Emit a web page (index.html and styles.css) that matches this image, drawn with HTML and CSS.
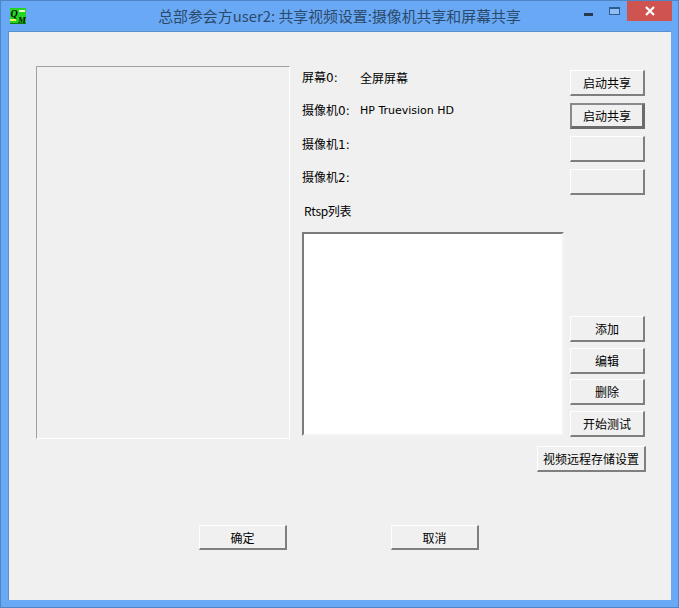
FILE: index.html
```html
<!DOCTYPE html>
<html lang="zh-CN">
<head>
    <meta charset="UTF-8">
    <meta name="viewport" content="width=device-width, initial-scale=1.0">
    <title>共享视频设置</title>
    <link rel="stylesheet" href="styles.css">
</head>
<body>
    <div class="window">
        <div class="titlebar">
            <div class="title-left">
                <svg class="app-icon" width="16" height="16" viewBox="0 0 16 16">
                    <rect width="16" height="16" fill="#22d622"/>
                    <rect x="0" y="11" width="6" height="2" fill="#e8f060"/>
                    <rect x="9" y="2" width="6" height="2" fill="#f4f8d0"/>
                    <rect y="15" width="16" height="1" fill="#0a7a0a"/>
                    <text class="icon-letter" x="0.5" y="9">Q</text>
                    <text class="icon-letter icon-letter-small" x="8" y="15">M</text>
                </svg>
            </div>
            <div class="title-text">总部参会方user2: 共享视频设置:摄像机共享和屏幕共享</div>
            <div class="controls">
                <div class="ctl-btn ctl-min"><span class="min-glyph"></span></div>
                <div class="ctl-btn ctl-max"><span class="max-glyph"></span></div>
                <div class="ctl-close">
                    <svg width="12" height="10" viewBox="0 0 12 10">
                        <path d="M2 1 L10 9 M10 1 L2 9" stroke="#fff" stroke-width="2.2" fill="none"/>
                    </svg>
                </div>
            </div>
        </div>

        <div class="client">
            <div class="main-row">
                <div class="preview"></div>

                <div class="middle">
                    <div class="source-row"><span class="source-label">屏幕0:</span><span class="source-value">全屏屏幕</span></div>
                    <div class="source-row"><span class="source-label">摄像机0:</span><span class="source-value latin">HP Truevision HD</span></div>
                    <div class="source-row"><span class="source-label">摄像机1:</span></div>
                    <div class="source-row"><span class="source-label">摄像机2:</span></div>
                    <div class="rtsp-label">Rtsp列表</div>
                    <div class="rtsp-list"></div>
                </div>

                <div class="side">
                    <div class="btn-group">
                        <button class="btn side-btn">启动共享</button>
                        <button class="btn side-btn btn-default">启动共享</button>
                        <button class="btn side-btn"></button>
                        <button class="btn side-btn"></button>
                    </div>
                    <div class="btn-group lower">
                        <button class="btn side-btn">添加</button>
                        <button class="btn side-btn">编辑</button>
                        <button class="btn side-btn">删除</button>
                        <button class="btn side-btn">开始测试</button>
                    </div>
                </div>
            </div>

            <div class="storage-row">
                <button class="btn storage-btn">视频远程存储设置</button>
            </div>

            <div class="footer-row">
                <button class="btn footer-btn">确定</button>
                <button class="btn footer-btn">取消</button>
            </div>
        </div>
    </div>
</body>
</html>
```

FILE: styles.css
```css
html, body {
    margin: 0;
    padding: 0;
}

body {
    width: 679px;
    height: 608px;
    overflow: hidden;
    font-family: "Noto Sans CJK SC", "Liberation Sans", sans-serif;
    font-size: 12px;
    color: #000;
}

.window {
    width: 679px;
    height: 608px;
    box-sizing: border-box;
    background-color: #69a8f4;
    border: 1px solid #4f86c6;
    padding: 0 7px 7px 7px;
    display: flex;
    flex-direction: column;
}

.titlebar {
    height: 30px;
    display: grid;
    grid-template-columns: 1fr auto 1fr;
    flex-shrink: 0;
}

.title-left {
    padding: 7px 0 0 2px;
}

.app-icon {
    display: block;
}

.icon-letter {
    font-family: "Liberation Serif", serif;
    font-size: 10px;
    font-weight: bold;
    font-style: italic;
    fill: #000;
}

.icon-letter-small {
    font-size: 9px;
}

.title-text {
    font-size: 14.9px;
    line-height: 30px;
    color: #2b4a6b;
    white-space: nowrap;
}

.controls {
    display: flex;
    justify-content: flex-end;
    align-items: flex-start;
    margin-right: -1px;
}

.ctl-btn {
    width: 26px;
    height: 20px;
    display: flex;
    align-items: center;
    justify-content: center;
}

.min-glyph {
    display: block;
    width: 9px;
    height: 3px;
    margin-top: 6px;
    background-color: #26394d;
}

.max-glyph {
    display: block;
    width: 9px;
    height: 5px;
    margin-top: -1px;
    border: 1px solid #2f5d8f;
    border-top-width: 2px;
    background-color: #8fbef5;
}

.ctl-close {
    width: 45px;
    height: 20px;
    background-color: #cf5450;
    display: flex;
    align-items: center;
    justify-content: center;
}

.client {
    flex: 1;
    background-color: #f0f0f0;
    border: 1px solid #5a90cc;
    border-width: 1px 0 0 1px;
    padding: 34px 25px 0 27px;
    display: flex;
    flex-direction: column;
}

.main-row {
    display: flex;
    height: 373px;
}

.preview {
    width: 252px;
    height: 371px;
    border: 1px solid;
    border-color: #a0a0a0 #fff #fff #a0a0a0;
}

.middle {
    width: 268px;
    margin-left: 12px;
    display: flex;
    flex-direction: column;
}

.source-row {
    height: 33.3px;
    line-height: 24px;
    display: flex;
}

.source-label {
    width: 58px;
    font-family: "DejaVu Sans", "Noto Sans CJK SC", sans-serif;
    white-space: nowrap;
}

.source-value {
    white-space: nowrap;
}

.latin {
    font-family: "DejaVu Sans", sans-serif;
    font-size: 11px;
}

.rtsp-label {
    height: 32.8px;
    line-height: 24px;
    padding-left: 2px;
    letter-spacing: -0.3px;
}

.rtsp-list {
    width: 258px;
    height: 200px;
    background-color: #fff;
    border: 2px solid;
    border-color: #7c7c7c #f4f4f4 #f4f4f4 #7c7c7c;
}

.side {
    width: 75px;
    padding-top: 4px;
    display: flex;
    flex-direction: column;
}

.btn-group {
    display: flex;
    flex-direction: column;
    gap: 7px;
}

.btn-group.lower {
    margin-top: 121px;
    gap: 5.67px;
}

.btn {
    padding: 0;
    margin: 0;
    font-family: inherit;
    font-size: 12px;
    color: #000;
    background-color: #f0f0f0;
    border: 2px solid;
    border-color: #fff #7f7f7f #7f7f7f #fff;
    border-top-width: 1px;
    border-left-width: 1px;
    box-sizing: border-box;
}

.side-btn {
    width: 75px;
    height: 26px;
}

.btn-default {
    border: 2px solid #6b6b6b;
    border-top-color: #8a8a8a;
    border-left-color: #8a8a8a;
    border-bottom-width: 3px;
    border-right-width: 3px;
}

.storage-row {
    display: flex;
    justify-content: flex-end;
    margin-top: 7px;
}

.storage-btn {
    width: 109px;
    height: 26px;
}

.footer-row {
    display: flex;
    gap: 104px;
    margin-top: 53px;
    padding-left: 163px;
}

.footer-btn {
    width: 88px;
    height: 25px;
}
```
